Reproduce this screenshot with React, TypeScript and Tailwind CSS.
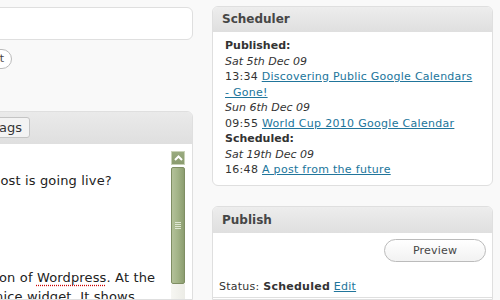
export default function App() {
  return (
    <div className="w-[500px] h-[300px] overflow-hidden bg-[#f9f9f9] flex text-[#333] font-['DejaVu_Sans',Verdana,sans-serif]">
      {/* Left column */}
      <div className="w-[193px] shrink-0 flex flex-col">
        <div className="mt-[7px] -ml-[10px] w-[203px] h-[33px] shrink-0 bg-white border border-[#dfdfdf] rounded-[6px]" />
        <div className="mt-[9px] -ml-[30px] w-[42px] h-[20px] shrink-0 rounded-full border border-[#bbbbbb] bg-white text-[11px] leading-[18px] text-[#464646] text-right pr-[7px]">
          Edit
        </div>
        <div className="mt-[42px] -ml-[10px] w-[203px] flex-1 min-h-0 border border-[#dfdfdf] rounded-t-[6px] overflow-hidden flex flex-col">
          <div className="h-[32px] shrink-0 bg-gradient-to-b from-[#eaeaea] to-[#dfdfdf] flex">
            <div className="w-[39px] shrink-0 flex justify-end">
              <div className="mt-[5px] h-[21px] shrink-0 px-[7px] rounded-[3px] border border-[#c4c4c4] bg-[#f3f3f3] text-[13px] leading-[19px] text-[#333] whitespace-nowrap">
                close tags
              </div>
            </div>
          </div>
          <div className="flex-1 bg-white flex">
            <div className="flex-1 min-w-0 text-[13px] leading-[19px] text-[#222] whitespace-nowrap tracking-[0.15px]">
              <div className="mt-[27px] ml-[1px]">post is going live?</div>
              <div className="mt-[78px] ml-[8px]">
                on of{" "}
                <span className="underline decoration-dotted decoration-[#c00] underline-offset-[3px]">Wordpress</span>. At the
              </div>
              <div className="ml-[4px]">nice widget. It shows</div>
            </div>
            <div className="w-[14px] shrink-0 mr-[7px] flex flex-col">
              <div className="mt-[7px] h-[14px] shrink-0 bg-gradient-to-b from-[#9aab7f] to-[#8a9b6e] border border-[#c9d2b8] flex items-center justify-center">
                <svg width="9" height="6" viewBox="0 0 9 6">
                  <path d="M1 5 L4.5 1.5 L8 5" stroke="white" strokeWidth="2" fill="none" />
                </svg>
              </div>
              <div className="mt-[2px] h-[117px] shrink-0 rounded-[2px] border border-[#7f8e63] bg-gradient-to-r from-[#b3c199] via-[#a2b386] to-[#8c9d70] flex items-center justify-center">
                <div className="flex flex-col gap-[1px]">
                  <div className="w-[6px] h-[1px] bg-[#dfe6d2]" />
                  <div className="w-[6px] h-[1px] bg-[#dfe6d2]" />
                  <div className="w-[6px] h-[1px] bg-[#dfe6d2]" />
                  <div className="w-[6px] h-[1px] bg-[#dfe6d2]" />
                </div>
              </div>
              <div className="flex-1 bg-gradient-to-r from-[#f6f6f2] to-[#ecece6]" />
            </div>
          </div>
        </div>
      </div>

      {/* Right column */}
      <div className="ml-[19px] w-[281px] shrink-0 flex flex-col">
        <div className="mt-[6px] border border-[#dfdfdf] rounded-[6px] bg-white overflow-hidden">
          <div className="h-[25px] bg-gradient-to-b from-[#ededed] to-[#dfdfdf] pl-[9px] text-[12px] font-bold leading-[25px] text-[#464646]">
            Scheduler
          </div>
          <div className="pt-[6px] pb-[7px] pl-[12px] text-[11px] leading-[15.5px] whitespace-nowrap">
            <div className="font-bold">Published:</div>
            <div className="italic">Sat 5th Dec 09</div>
            <div className="tracking-[0.25px]">
              13:34{" "}
              <a className="text-[#21759b] underline">
                Discovering Public Google Calendars
                <br />- Gone!
              </a>
            </div>
            <div className="italic">Sun 6th Dec 09</div>
            <div className="tracking-[0.3px]">
              09:55 <a className="text-[#21759b] underline">World Cup 2010 Google Calendar</a>
            </div>
            <div className="font-bold">Scheduled:</div>
            <div className="italic">Sat 19th Dec 09</div>
            <div className="tracking-[0.3px]">
              16:48 <a className="text-[#21759b] underline">A post from the future</a>
            </div>
          </div>
        </div>

        <div className="mt-[20px] border border-[#dfdfdf] rounded-t-[6px] bg-white overflow-hidden flex-1">
          <div className="h-[26px] bg-gradient-to-b from-[#ededed] to-[#dfdfdf] pl-[9px] text-[12px] font-bold leading-[26px] text-[#464646]">
            Publish
          </div>
          <div className="flex justify-end pr-[6px] pt-[6px]">
            <div className="w-[102px] h-[23px] rounded-full border border-[#bbbbbb] bg-gradient-to-b from-white to-[#f2f2f2] text-[11px] leading-[21px] text-center text-[#464646] tracking-[0.2px]">
              Preview
            </div>
          </div>
          <div className="mt-[17px] pl-[6px] text-[11px] leading-[15px] whitespace-nowrap tracking-[0.25px]">
            Status: <span className="font-bold">Scheduled</span>{" "}
            <a className="text-[#21759b] underline">Edit</a>
          </div>
          <div className="mt-[3px] border-t border-[#dfdfdf]" />
        </div>
      </div>
    </div>
  );
}
